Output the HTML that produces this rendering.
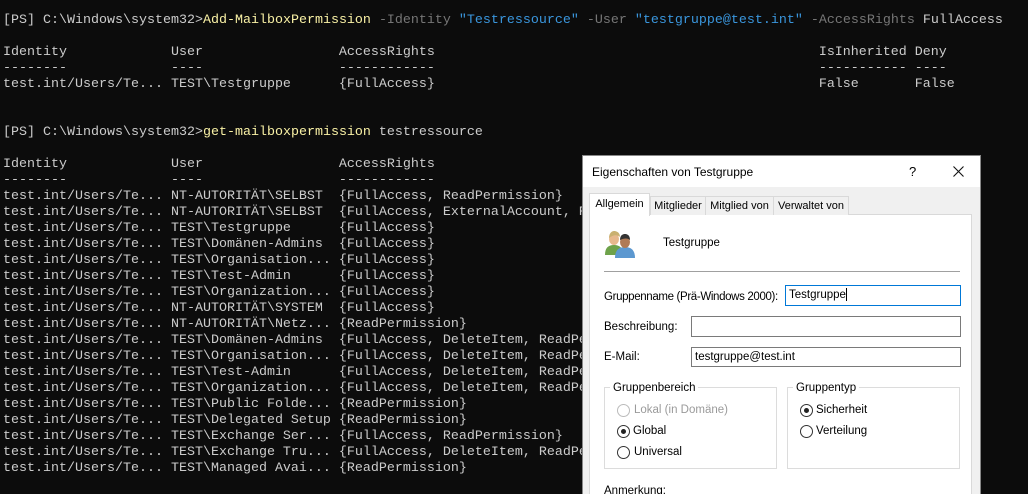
<!DOCTYPE html>
<html style="overflow:hidden;width:1028px;height:494px"><head><meta charset="utf-8">
<style>
html,body{margin:0;padding:0}
body{width:1028px;height:494px;overflow:hidden;background:#0c0c0c;position:relative;font-family:"Liberation Sans",sans-serif}
#term{position:absolute;left:3px;top:13px;margin:0;font-family:"Liberation Mono",monospace;font-size:13.33px;line-height:16px;color:#cccccc;white-space:pre}
.y{color:#f9f1a5}.g{color:#767676}.b{color:#3a96dd}
#dlg{position:absolute;left:582px;top:155px;width:397px;height:339px;overflow:hidden;background:#f0f0f0;border-left:1px solid #888;border-top:1px solid #888;border-right:1px solid #888;font-size:11.5px;color:#000}
.a{position:absolute;white-space:nowrap}
#title{position:absolute;left:0;top:0;width:397px;height:31px;background:#fff}
.tab{position:absolute;background:#f0f0f0;border:1px solid #d9d9d9;border-bottom:none;font-size:11px;text-align:center;line-height:18px;top:40px;height:18px}
#panel{position:absolute;left:6px;top:58px;width:381px;height:300px;background:#fff;border:1px solid #d9d9d9}
.inp{position:absolute;background:#fff;border:1px solid #7a7a7a;height:19px;font-size:11.5px;line-height:19px;padding-left:3px;box-sizing:border-box}
.box{position:absolute;border:1px solid #dcdcdc}
.rad{position:absolute;width:11px;height:11px;border:1px solid #333;border-radius:50%;background:#fff}
.rad.on::after{content:"";position:absolute;left:3px;top:3px;width:5px;height:5px;border-radius:50%;background:#222}
</style></head><body>
<pre id="term">[PS] C:\Windows\system32&gt;<span class="y">Add-MailboxPermission</span> <span class="g">-Identity</span> <span class="b">"Testressource"</span> <span class="g">-User</span> <span class="b">"testgruppe@test.int"</span> <span class="g">-AccessRights</span> FullAccess

Identity             User                 AccessRights                                                IsInherited Deny
--------             ----                 ------------                                                ----------- ----
test.int/Users/Te... TEST\Testgruppe      {FullAccess}                                                False       False


[PS] C:\Windows\system32&gt;<span class="y">get-mailboxpermission</span> testressource

Identity             User                 AccessRights
--------             ----                 ------------
test.int/Users/Te... NT-AUTORITÄT\SELBST  {FullAccess, ReadPermission}
test.int/Users/Te... NT-AUTORITÄT\SELBST  {FullAccess, ExternalAccount, ReadPermission}
test.int/Users/Te... TEST\Testgruppe      {FullAccess}
test.int/Users/Te... TEST\Domänen-Admins  {FullAccess}
test.int/Users/Te... TEST\Organisation... {FullAccess}
test.int/Users/Te... TEST\Test-Admin      {FullAccess}
test.int/Users/Te... TEST\Organization... {FullAccess}
test.int/Users/Te... NT-AUTORITÄT\SYSTEM  {FullAccess}
test.int/Users/Te... NT-AUTORITÄT\Netz... {ReadPermission}
test.int/Users/Te... TEST\Domänen-Admins  {FullAccess, DeleteItem, ReadPermission}
test.int/Users/Te... TEST\Organisation... {FullAccess, DeleteItem, ReadPermission}
test.int/Users/Te... TEST\Test-Admin      {FullAccess, DeleteItem, ReadPermission}
test.int/Users/Te... TEST\Organization... {FullAccess, DeleteItem, ReadPermission}
test.int/Users/Te... TEST\Public Folde... {ReadPermission}
test.int/Users/Te... TEST\Delegated Setup {ReadPermission}
test.int/Users/Te... TEST\Exchange Ser... {FullAccess, ReadPermission}
test.int/Users/Te... TEST\Exchange Tru... {FullAccess, DeleteItem, ReadPermission}
test.int/Users/Te... TEST\Managed Avai... {ReadPermission}</pre>

<div id="dlg">
 <div id="title">
  <div class="a" style="left:9px;top:9px;font-size:12px">Eigenschaften von Testgruppe</div>
  <div class="a" style="left:326px;top:8px;font-size:13px">?</div>
  <svg class="a" style="left:370px;top:10px" width="11" height="11"><path d="M0.5 0.5L10.5 10.5M10.5 0.5L0.5 10.5" stroke="#111" stroke-width="1.1"/></svg>
 </div>
 <div id="panel">
  <svg class="a" style="left:14px;top:14px" width="32" height="30" viewBox="0 0 32 30">
   <path d="M1 26c0-7 3-10 9-10s9 3 9 10z" fill="#6ea24a"/>
   <ellipse cx="10" cy="10" rx="5" ry="6" fill="#e7b88d"/>
   <path d="M5 9c0-5 3-7 5-7s6 1 6 6c-2-2-6-3-11 1z" fill="#c9b070"/>
   <path d="M11 29c0-8 4-11 10-11s10 3 10 11z" fill="#5c98d0"/>
   <ellipse cx="21" cy="13" rx="5" ry="6" fill="#b07a55"/>
   <path d="M16 11c0-5 3-6 5-6s5 1 5 6c-2-2-6-2-10 0z" fill="#333"/>
  </svg>
  <div class="a" style="left:73px;top:22px">Testgruppe</div>
  <div class="a" style="left:14px;top:56px;width:356px;height:1px;background:#a0a0a0"></div>
  <div class="a" style="left:14px;top:76px;letter-spacing:-0.35px">Gruppenname (Prä-Windows 2000):</div>
  <div class="inp" style="left:195px;top:70px;width:176px;height:21px;border-color:#0078d7;line-height:19px">Testgruppe<span style="display:inline-block;width:1px;height:13px;background:#000;vertical-align:middle"></span></div>
  <div class="a" style="left:14px;top:106px">Beschreibung:</div>
  <div class="inp" style="left:101px;top:101px;width:270px;height:21px"></div>
  <div class="a" style="left:14px;top:136px">E-Mail:</div>
  <div class="inp" style="left:101px;top:132px;width:270px;height:20px">testgruppe@test.int</div>
  <div class="box" style="left:14px;top:172px;width:171px;height:80px"></div>
  <div class="a" style="left:20px;top:167px;background:#fff;padding:0 3px">Gruppenbereich</div>
  <div class="rad" style="left:27px;top:189px;border-color:#bbb"></div><div class="a" style="left:44px;top:189px;color:#9a9a9a">Lokal (in Domäne)</div>
  <div class="rad on" style="left:27px;top:210px"></div><div class="a" style="left:43px;top:210px">Global</div>
  <div class="rad" style="left:27px;top:231px"></div><div class="a" style="left:44px;top:231px">Universal</div>
  <div class="box" style="left:197px;top:172px;width:171px;height:80px"></div>
  <div class="a" style="left:203px;top:167px;background:#fff;padding:0 3px">Gruppentyp</div>
  <div class="rad on" style="left:210px;top:189px"></div><div class="a" style="left:226px;top:189px">Sicherheit</div>
  <div class="rad" style="left:210px;top:210px"></div><div class="a" style="left:226px;top:210px">Verteilung</div>
  <div class="a" style="left:14px;top:270px">Anmerkung:</div>
 </div>
 <div class="tab" style="left:67px;width:54px">Mitglieder</div>
 <div class="tab" style="left:122px;width:67px">Mitglied von</div>
 <div class="tab" style="left:190px;width:74px">Verwaltet von</div>
 <div class="tab" style="left:6px;top:37px;height:22px;width:59px;background:#fff;line-height:20px;z-index:2">Allgemein</div>
</div>
</body></html>
